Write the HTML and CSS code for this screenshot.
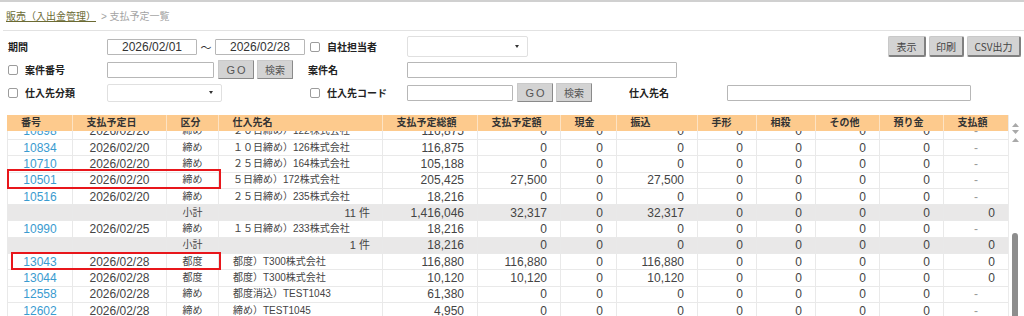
FILE: index.html
```html
<!DOCTYPE html>
<html lang="ja">
<head>
    <meta charset="UTF-8">
    <title>支払予定一覧</title>
    <link rel="stylesheet" href="styles.css">
</head>
<body>
    <div class="topline"></div>
    <div class="crumb"><a href="#">販売（入出金管理）</a><span class="sep">&gt; 支払予定一覧</span></div>

    <div class="filters">
        <div class="frow">
            <span class="lbl">期間</span>
            <input class="inp date" value="2026/02/01">
            <span class="tilde">〜</span>
            <input class="inp date" value="2026/02/28">
            <span class="lbl2 r1"><input type="checkbox" class="chk">自社担当者</span>
            <div class="sel sel-staff"><i class="caret"></i></div>
            <div class="actions">
                <button class="abtn w-show">表示</button>
                <button class="abtn w-print">印刷</button>
                <button class="abtn w-csv">CSV出力</button>
            </div>
        </div>
        <div class="frow">
            <span class="lbl"><input type="checkbox" class="chk">案件番号</span>
            <input class="inp w-anken">
            <button class="btn go">GO</button>
            <button class="btn">検索</button>
            <span class="lbl2 r2 plain">案件名</span>
            <input class="inp w-ankenname">
        </div>
        <div class="frow">
            <span class="lbl"><input type="checkbox" class="chk">仕入先分類</span>
            <div class="sel sel-kind"><i class="caret"></i></div>
            <span class="lbl2 r3"><input type="checkbox" class="chk">仕入先コード</span>
            <input class="inp w-code">
            <button class="btn go">GO</button>
            <button class="btn">検索</button>
            <span class="lbl3">仕入先名</span>
            <input class="inp w-name">
        </div>
    </div>

    <div class="grid">
        <div class="sheet">
            <table class="head">
                <colgroup>
                    <col style="width:65px"><col style="width:94px"><col style="width:52px"><col style="width:164px">
                    <col style="width:95px"><col style="width:83px"><col style="width:56px"><col style="width:81px">
                    <col style="width:59px"><col style="width:59px"><col style="width:64px"><col style="width:64px"><col style="width:65px">
                </colgroup>
                <tr>
                    <th>番号</th><th>支払予定日</th><th>区分</th><th>仕入先名</th><th>支払予定総額</th><th>支払予定額</th>
                    <th>現金</th><th>振込</th><th>手形</th><th>相殺</th><th>その他</th><th>預り金</th><th>支払額</th>
                </tr>
            </table>
            <div class="body">
                <table class="rows">
                    <colgroup>
                        <col style="width:65px"><col style="width:94px"><col style="width:52px"><col style="width:164px">
                        <col style="width:95px"><col style="width:83px"><col style="width:56px"><col style="width:81px">
                        <col style="width:59px"><col style="width:59px"><col style="width:64px"><col style="width:64px"><col style="width:65px">
                    </colgroup>
                    <tr><td class="no">10898</td><td class="dt">2026/02/20</td><td class="kb">締め</td><td class="nm">２０日締め）122株式会社</td><td>116,875</td><td>0</td><td>0</td><td>0</td><td>0</td><td>0</td><td>0</td><td>0</td><td class="dash">-</td></tr>
                    <tr><td class="no">10834</td><td class="dt">2026/02/20</td><td class="kb">締め</td><td class="nm">１０日締め）126株式会社</td><td>116,875</td><td>0</td><td>0</td><td>0</td><td>0</td><td>0</td><td>0</td><td>0</td><td class="dash">-</td></tr>
                    <tr><td class="no">10710</td><td class="dt">2026/02/20</td><td class="kb">締め</td><td class="nm">２５日締め）164株式会社</td><td>105,188</td><td>0</td><td>0</td><td>0</td><td>0</td><td>0</td><td>0</td><td>0</td><td class="dash">-</td></tr>
                    <tr><td class="no">10501</td><td class="dt">2026/02/20</td><td class="kb">締め</td><td class="nm">５日締め）172株式会社</td><td>205,425</td><td>27,500</td><td>0</td><td>27,500</td><td>0</td><td>0</td><td>0</td><td>0</td><td class="dash">-</td></tr>
                    <tr><td class="no">10516</td><td class="dt">2026/02/20</td><td class="kb">締め</td><td class="nm">２５日締め）235株式会社</td><td>18,216</td><td>0</td><td>0</td><td>0</td><td>0</td><td>0</td><td>0</td><td>0</td><td class="dash">-</td></tr>
                    <tr class="sub"><td></td><td></td><td class="kb">小計</td><td class="cnt">11 件</td><td>1,416,046</td><td>32,317</td><td>0</td><td>32,317</td><td>0</td><td>0</td><td>0</td><td>0</td><td>0</td></tr>
                    <tr><td class="no">10990</td><td class="dt">2026/02/25</td><td class="kb">締め</td><td class="nm">１５日締め）233株式会社</td><td>18,216</td><td>0</td><td>0</td><td>0</td><td>0</td><td>0</td><td>0</td><td>0</td><td class="dash">-</td></tr>
                    <tr class="sub"><td></td><td></td><td class="kb">小計</td><td class="cnt">1 件</td><td>18,216</td><td>0</td><td>0</td><td>0</td><td>0</td><td>0</td><td>0</td><td>0</td><td>0</td></tr>
                    <tr><td class="no">13043</td><td class="dt">2026/02/28</td><td class="kb">都度</td><td class="nm">都度）T300株式会社</td><td>116,880</td><td>116,880</td><td>0</td><td>116,880</td><td>0</td><td>0</td><td>0</td><td>0</td><td>0</td></tr>
                    <tr><td class="no">13044</td><td class="dt">2026/02/28</td><td class="kb">都度</td><td class="nm">都度）T300株式会社</td><td>10,120</td><td>10,120</td><td>0</td><td>10,120</td><td>0</td><td>0</td><td>0</td><td>0</td><td>0</td></tr>
                    <tr><td class="no">12558</td><td class="dt">2026/02/28</td><td class="kb">締め</td><td class="nm">都度消込）TEST1043</td><td>61,380</td><td>0</td><td>0</td><td>0</td><td>0</td><td>0</td><td>0</td><td>0</td><td class="dash">-</td></tr>
                    <tr><td class="no">12602</td><td class="dt">2026/02/28</td><td class="kb">締め</td><td class="nm">締め）TEST1045</td><td>4,950</td><td>0</td><td>0</td><td>0</td><td>0</td><td>0</td><td>0</td><td>0</td><td class="dash">-</td></tr>
                </table>
            </div>
            <!-- 赤枠（注目行） -->
            <div class="mark m1"></div>
            <div class="mark m2"></div>
        </div>
        <div class="vbar">
            <svg class="arrows" width="7" height="22" viewBox="0 0 7 22">
                <polygon points="0,5 3.5,1 7,5" fill="#a9a9a9"/>
                <polygon points="0,8 7,8 3.5,12" fill="#a9a9a9"/>
                <polygon points="0,20 3.5,16 7,20" fill="#a9a9a9"/>
            </svg>
            <div class="thumb"></div>
        </div>
    </div>
</body>
</html>
```

FILE: styles.css
```css
* {
    box-sizing: border-box;
}
body {
    margin: 0;
    font-family: "Liberation Sans", "Noto Sans CJK JP", sans-serif;
    font-size: 12px;
    color: #444;
    background: #fff;
    overflow: hidden;
}
.topline {
    height: 2px;
    background: #d0d0d0;
}
.crumb {
    height: 29px;
    margin-left: 3px;
    padding: 8px 0 0 3px;
    border-bottom: 1px solid #e2e2e2;
    font-size: 10px;
    line-height: 13px;
}
.crumb a {
    color: #6b6a33;
}
.crumb .sep {
    margin-left: 5px;
    color: #a3a3a3;
}

/* 検索条件 */
.filters {
    padding: 4px 3px 0 8px;
}
.frow {
    display: flex;
    align-items: center;
    height: 23px;
}
.lbl {
    display: flex;
    align-items: center;
    width: 99px;
    font-size: 10px;
    font-weight: bold;
    color: #222;
}
.lbl2 {
    display: flex;
    align-items: center;
    width: 101px;
    padding-left: 4px;
    font-size: 10px;
    font-weight: bold;
    color: #222;
}
.lbl2.plain { padding-left: 2px; }
.lbl2.r1 { margin-left: 1px; }
.lbl2.r2 { margin-left: 13px; }
.lbl2.r3 { margin-left: 84px; }
.lbl3 {
    width: 98px;
    margin-left: 37px;
    font-size: 10px;
    font-weight: bold;
    color: #222;
}
.chk {
    appearance: none;
    -webkit-appearance: none;
    width: 10px;
    height: 10px;
    margin: 0 7px 0 0;
    border: 1px solid #9c9c9c;
    border-radius: 2px;
    background: #fff;
}
.inp {
    height: 16px;
    padding: 0 3px;
    border: 1px solid #b7b7b7;
    border-radius: 1px;
    font-family: "Liberation Sans", sans-serif;
    font-size: 12px;
    color: #333;
    outline: none;
}
.inp.date {
    width: 90px;
    text-align: center;
}
.tilde {
    width: 18px;
    text-align: center;
    font-size: 11px;
    color: #333;
}
.w-anken { width: 107px; }
.w-ankenname { width: 270px; }
.w-code { width: 106px; }
.w-name { width: 244px; }
.sel {
    display: flex;
    align-items: center;
    justify-content: flex-end;
    border: 1px solid #e0e0e0;
    border-radius: 2px;
    background: #fff;
}
.sel-staff {
    width: 121px;
    height: 21px;
    padding-right: 8px;
}
.sel-kind {
    width: 115px;
    height: 18px;
    padding-right: 8px;
}
.caret {
    width: 0;
    height: 0;
    border-left: 2px solid transparent;
    border-right: 2px solid transparent;
    border-top: 3px solid #333;
}
.btn {
    width: 36px;
    height: 19px;
    margin-left: 4px;
    padding: 0;
    border: 1px solid #c9c9c9;
    border-right-color: #8a8a8a;
    border-bottom-color: #8a8a8a;
    border-radius: 1px;
    background: #d3d3d3;
    font-family: "Noto Sans CJK JP", sans-serif;
    font-size: 10px;
    color: #555;
}
.btn + .btn { margin-left: 3px; }
.btn.go {
    font-family: "Liberation Sans", sans-serif;
    font-size: 11px;
    letter-spacing: 2px;
    padding-left: 2px;
}
.actions {
    display: flex;
    gap: 3px;
    margin-left: auto;
}
.abtn {
    height: 21px;
    padding: 0;
    border: 1px solid #c9c9c9;
    border-right: 2px solid #808080;
    border-bottom: 2px solid #808080;
    border-radius: 2px;
    background: #d3d3d3;
    font-family: "Noto Sans CJK JP", sans-serif;
    font-size: 10px;
    color: #444;
}
.w-show { width: 38px; }
.w-print { width: 35px; }
.w-csv { width: 54px; }

/* 一覧 */
.grid {
    display: flex;
    height: 201px;
    margin-top: 11px;
    padding-left: 7px;
    overflow: hidden;
}
.sheet {
    position: relative;
    width: 1001px;
}
table {
    width: 1001px;
    border-collapse: collapse;
    table-layout: fixed;
}
.head th {
    height: 16px;
    padding: 0 0 0 14px;
    border-left: 1px solid #fde3c4;
    background: #fdca8d;
    font-size: 10px;
    font-weight: bold;
    color: #333;
    text-align: left;
    white-space: nowrap;
    line-height: 14px;
}
.head th:first-child { border-left: none; }
.body {
    height: 185px;
    overflow: hidden;
}
.rows {
    margin-top: -8.3px;
}
.rows tr {
    height: 16.3px;
}
.rows td {
    padding: 0 13px 0 0;
    border: 1px solid #e9e9e9;
    text-align: right;
    white-space: nowrap;
    overflow: hidden;
    line-height: 14px;
    color: #444;
}
.rows td.no {
    padding: 0;
    text-align: center;
    color: #3a9bd0;
}
.rows td.dt {
    padding: 0;
    text-align: center;
}
.rows td.kb {
    padding: 0;
    text-align: center;
    font-size: 10px;
}
.rows td.nm {
    padding: 0 0 0 14px;
    text-align: left;
    font-size: 10px;
}
.rows td.cnt {
    padding-right: 12px;
    font-size: 11px;
}
.rows td.dash {
    padding: 0;
    text-align: center;
    color: #999;
}
.rows tr.sub td {
    background: #e9e8e8;
}
.mark {
    position: absolute;
    border: 2px solid #e8161b;
}
.m1 {
    left: 0;
    top: 54px;
    width: 214px;
    height: 20px;
}
.m2 {
    left: 4px;
    top: 137px;
    width: 210px;
    height: 18px;
}
.vbar {
    width: 16px;
    border-left: 1px solid #ebebeb;
}
.arrows {
    display: block;
    margin: 7px 0 0 3px;
}
.thumb {
    width: 6px;
    height: 100px;
    margin: 89px 0 0 3px;
    border-radius: 3px;
    background: #8d8d8d;
}
```
